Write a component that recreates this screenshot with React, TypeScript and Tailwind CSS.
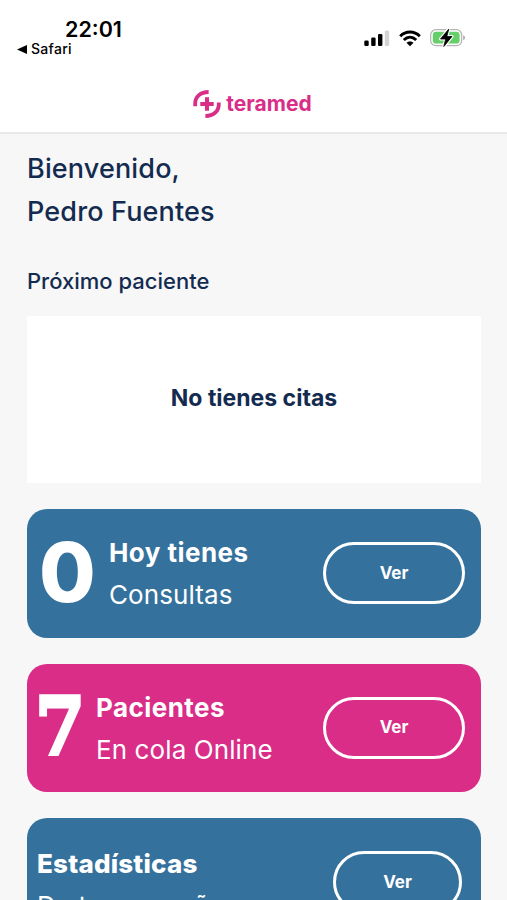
import type { ReactNode } from 'react';
import { clsx } from 'clsx';

function SignalIcon() {
  return (
    <svg width="26" height="17" viewBox="0 0 26 17" aria-hidden="true">
      <rect x="0.3" y="10.5" width="4.4" height="5.5" rx="1.3" />
      <rect x="7.2" y="7.5" width="4.4" height="8.5" rx="1.3" />
      <rect x="14" y="4" width="4.4" height="12" rx="1.3" />
      <rect x="20.8" y="0.5" width="4.4" height="15.5" rx="1.3" fill="#d4d4d4" />
    </svg>
  );
}

function WifiIcon() {
  return (
    <svg width="22" height="17" viewBox="0 0 22 17" aria-hidden="true">
      <g fill="none" stroke="#000" strokeWidth="2.9">
        <path d="M1.2 6.2C6.8 0.6 15.2 0.6 20.8 6.2" />
        <path d="M4.8 10C8.5 6.4 13.5 6.4 17.2 10" />
      </g>
      <path d="M7.5 12.8C9.5 10.9 12.5 10.9 14.5 12.8L11 16.3Z" />
    </svg>
  );
}

function BatteryIcon() {
  return (
    <svg width="36" height="20" viewBox="0 0 36 20" aria-hidden="true">
      <rect x="0.7" y="1.7" width="31" height="16" rx="5.2" fill="#fff" stroke="#b4b4b4" strokeWidth="1.2" />
      <rect x="2.8" y="3.8" width="26.8" height="11.8" rx="3.4" fill="#65cf6a" />
      <path d="M33.2 7.3C35.6 8 35.6 11.4 33.2 12.1Z" fill="#aaa" />
      <path d="M18.8 1L10.5 11h5.2L13.8 18.5 22 8.5h-5.2Z" stroke="#fff" strokeWidth="3" strokeLinejoin="round" />
      <path d="M18.8 1L10.5 11h5.2L13.8 18.5 22 8.5h-5.2Z" stroke="#000" strokeWidth="0.8" strokeLinejoin="round" />
    </svg>
  );
}

function LogoMark() {
  return (
    <svg width="28" height="30" viewBox="0 0 28 30" aria-hidden="true">
      <g fill="none" stroke="#d92d88">
        <path d="M2.2 17.2V14.6C2.2 7.6 7.6 3 15.6 3" strokeWidth="3.8" />
        <path d="M25.8 13.6v1.6C25.8 22.4 20.4 27 12.4 27" strokeWidth="3.8" />
        <path d="M14 8.3v13.4M7.3 15h13.4" strokeWidth="4" />
      </g>
    </svg>
  );
}

type SummaryCardProps = {
  title: string;
  subtitle: string;
  count?: ReactNode;
  tone?: 'blue' | 'pink';
};

function SummaryCard({ title, subtitle, count, tone = 'blue' }: SummaryCardProps) {
  const hasCount = count !== undefined;
  return (
    <section
      className={clsx(
        'flex h-[128.5px] items-center justify-between rounded-[20px] text-white',
        tone === 'pink' ? 'bg-[#d92d88]' : 'bg-[#34719d]',
        hasCount ? 'pr-4 pl-3' : 'pr-[19px] pl-2.5',
      )}
    >
      <div className="flex items-center">
        {count}
        <div className="flex flex-col pt-0.5 whitespace-nowrap">
          {hasCount ? (
            <h2 className="text-[26px] leading-[42px] font-bold tracking-[0.45px]">{title}</h2>
          ) : (
            <h2 className="pt-1 text-[26px] leading-[42px] font-extrabold tracking-[0.2px]">{title}</h2>
          )}
          <p className="text-[26px] leading-[42px] tracking-[0.1px]">{subtitle}</p>
        </div>
      </div>
      <button
        type="button"
        className={clsx(
          'h-[62px] rounded-full border-3 border-white text-[17px] font-bold',
          hasCount ? 'w-[142px]' : 'w-[129px]',
        )}
      >
        Ver
      </button>
    </section>
  );
}

export default function App() {
  return (
    <div className="h-[900px] overflow-hidden bg-[#f7f7f7] font-['Inter',sans-serif]">
      <header className="h-[134px] border-b-2 border-[#e9e9e9] bg-white text-black">
        <div className="flex h-[76px] items-start justify-between pr-[41px] pl-[17px]">
          <div className="pt-4">
            <p className="pl-12 text-[21.5px] leading-[26px] font-semibold">22:01</p>
            <p className="flex items-center gap-1 text-sm leading-[14px] font-medium tracking-[0.3px]">
              <svg width="10" height="9" viewBox="0 0 10 9" aria-hidden="true">
                <path d="M0 4.5L10 0v9Z" />
              </svg>
              Safari
            </p>
          </div>
          <div className="flex items-center gap-[9px] pt-7">
            <SignalIcon />
            <WifiIcon />
            <BatteryIcon />
          </div>
        </div>
        <div className="flex h-14 items-center justify-center gap-[5px] pr-0.5">
          <LogoMark />
          <span className="text-[21px] leading-7 font-bold text-[#d92d88]">teramed</span>
        </div>
      </header>

      <main className="flex flex-col px-[27px] pt-[13px] text-[#142b50]">
        <h1 className="text-[27px] leading-[43px] font-medium tracking-[0.15px]">
          Bienvenido,
          <br />
          Pedro Fuentes
        </h1>
        <h2 className="pt-7 text-[22px] leading-10 font-medium">Próximo paciente</h2>
        <div className="mt-[15px] flex h-[167px] w-[454px] items-center justify-center bg-white pb-0.5 text-[23px] font-bold">
          No tienes citas
        </div>
        <div className="mt-[26px] flex w-[454px] flex-col gap-[26px]">
          <SummaryCard
            title="Hoy tienes"
            subtitle="Consultas"
            count={<span className="w-[70px] text-[82px] leading-none font-extrabold">0</span>}
          />
          <SummaryCard
            title="Pacientes"
            subtitle="En cola Online"
            tone="pink"
            count={
              <span className="-ml-1 w-[61px] pb-0.5 font-['DejaVu_Serif_Condensed','DejaVu_Serif',serif] text-[80px] leading-none font-bold [-webkit-text-stroke:3px_white]">
                7
              </span>
            }
          />
          <SummaryCard title="Estadísticas" subtitle="De tu campaña" />
        </div>
      </main>
    </div>
  );
}
